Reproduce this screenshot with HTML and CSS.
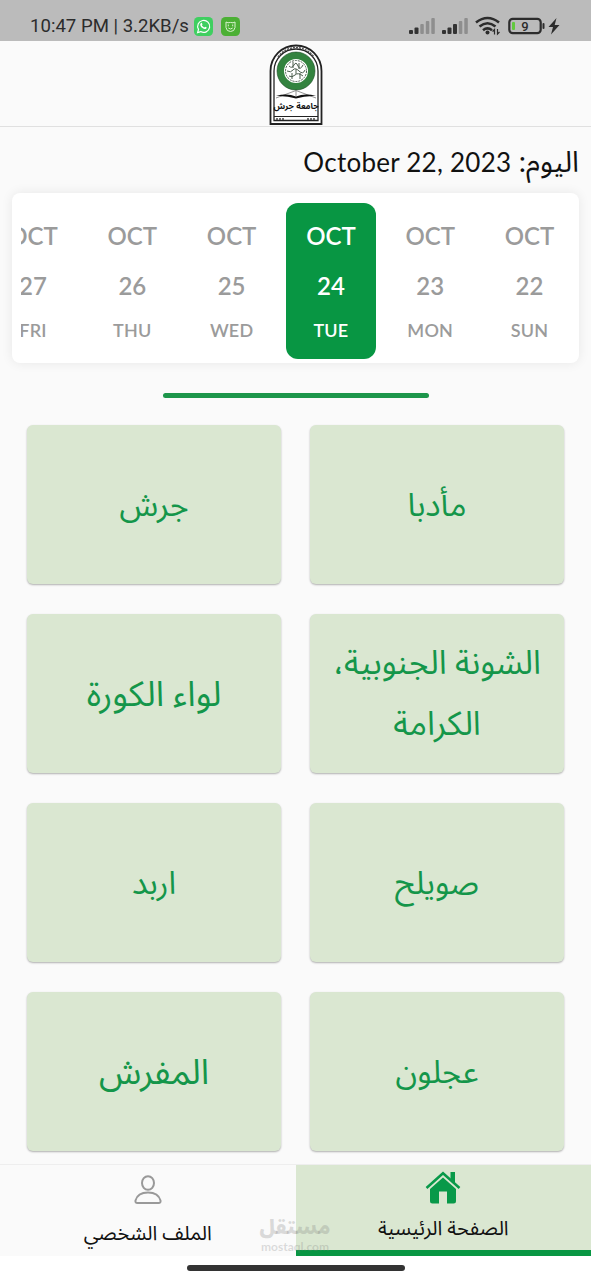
FILE: index.html
```
<!DOCTYPE html>
<html lang="ar" dir="rtl">
<head>
    <meta charset="UTF-8">
    <title>جامعة جرش</title>
    <link rel="stylesheet" href="styles.css">
</head>
<body>
<div class="status" dir="ltr">
    <span class="clock">10:47 PM | 3.2KB/s</span>
    <svg class="app" width="19" height="19" viewBox="0 0 19 19">
        <rect width="19" height="19" rx="4.5" fill="#3fcf60"/>
        <path d="M3.6 15.6l.9-3.2a6 6 0 1 1 2.2 2.2z" fill="none" stroke="#fff" stroke-width="1.2"/>
        <path d="M6.8 6.3c.6-.7 1-.5 1.3.2l.4.9-.6.9c.6 1.1 1.3 1.7 2.4 2.2l.9-.8 1.5.8c.1 1-1 1.7-2 1.5-2.500-.5-4.700-3-4.500-4.800z" fill="#fff"/>
    </svg>
    <svg class="app" width="19" height="19" viewBox="0 0 19 19">
        <rect width="19" height="19" rx="4.5" fill="#4cb035"/>
        <path d="M5 5l2 .8q2.500-.7 5 0l2-.8v5.500q-.5 4-4.500 4t-4.500-4z" fill="none" stroke="#d8f3cf"/>
        <path d="M7.300 7.500v1.800M11.700 7.500v1.800M7.300 11q2.200 2 4.400 0" fill="none" stroke="#d8f3cf"/>
    </svg>
    <svg class="signals" width="156" height="24" viewBox="0 0 156 24">
        <g fill="#333">
            <rect x="1" y="16" width="4" height="4" rx="1"/>
            <rect x="6.5" y="13.5" width="4" height="6.5" rx="1"/>
            <rect x="34" y="16" width="4" height="4" rx="1"/>
            <rect x="39.5" y="13.5" width="4" height="6.5" rx="1"/>
            <rect x="45" y="10" width="4" height="10" rx="1"/>
        </g>
        <g fill="#8e8e8e">
            <rect x="12.3" y="10" width="3.5" height="10" rx="1"/>
            <rect x="17.8" y="7" width="3.5" height="13" rx="1"/>
            <rect x="23.3" y="4" width="3.5" height="16" rx="1"/>
            <rect x="50.8" y="7" width="3.5" height="13" rx="1"/>
            <rect x="56.3" y="4" width="3.5" height="16" rx="1"/>
        </g>
        <g fill="none" stroke="#2c2c2c" stroke-width="2.6">
            <path d="M68 8.500q11.500-9 23 0"/>
            <path d="M71.500 12.500q8-6.500 16 0"/>
            <path d="M75 16.200q4.500-3.500 9 0"/>
            <rect x="101.3" y="4.8" width="31.4" height="14.4" rx="3.5" stroke-width="2.2"/>
        </g>
        <circle cx="79.5" cy="18.5" r="2" fill="#2c2c2c"/>
        <path d="M86.500 20.500v-5l-2 2M89.500 15v5l2-2" fill="none" stroke="#2c2c2c" stroke-width="1.2"/>
        <rect x="104" y="8" width="3" height="8" rx="1" fill="#62c93e"/>
        <text x="117" y="16.5" class="charge">9</text>
        <rect x="134.5" y="9" width="2" height="6" rx="1" fill="#2c2c2c"/>
        <path d="M148.500 4l-8 9h4.500l-2 7.500 8.500-9.500h-4.800z" fill="#2c2c2c"/>
    </svg>
</div>

<div class="header">
    <svg width="54" height="82" viewBox="0 0 54 82">
        <path d="M1.500 80V27a25.500 25.500 0 0 1 51 0v53z" fill="#fff" stroke="#222" stroke-width="1.8"/>
        <path d="M5 76.500V27a22 22 0 0 1 44 0v49.500z" fill="none" stroke="#222" stroke-width="1.3"/>
        <path d="M9 13a22 22 0 0 1 36 0" fill="none" stroke="#555" stroke-width="1.5" stroke-dasharray="2 1"/>
        <circle cx="27" cy="27" r="15.5" fill="#fff" stroke="#33833f" stroke-width="7"/>
        <circle cx="27" cy="27" r="19" fill="none" stroke="#244f2b" stroke-width=".6"/>
        <g fill="none" stroke="#4a5c4d" stroke-width="1">
            <circle cx="27" cy="27" r="10.5" stroke-dasharray="2 1"/>
            <path d="M20 22q3 3 5-1t4 1 5-1M18 27q4 2 6-1t6 1 6-1M20 32q3 2 6-1t8 1M24 18v6M30 19v6M27 25v5M23 29v6M31 29v6"/>
        </g>
        <path d="M27 46.500L7 54M27 46.500L47 54M27 46.500V52" fill="none" stroke="#777" stroke-width=".8"/>
        <path d="M7 52q11-3 20 .5 9-3.500 20-.5-11-.5-20 2.500-9-3-20-2.500z" fill="#111"/>
        <text x="27" y="65" class="logo-name">جامعة جرش</text>
        <path d="M5 72.500h44" stroke="#222" stroke-width="1"/>
        <path d="M7 75h9M38 75h9" stroke="#444" stroke-width="1.5" stroke-dasharray="2 1"/>
    </svg>
</div>

<div class="today">اليوم: <bdi>October 22, 2023</bdi></div>

<div class="calendar">
    <div class="days">
        <div class="day"><b>OCT</b><strong>22</strong><span>SUN</span></div>
        <div class="day"><b>OCT</b><strong>23</strong><span>MON</span></div>
        <div class="day active"><b>OCT</b><strong>24</strong><span>TUE</span></div>
        <div class="day"><b>OCT</b><strong>25</strong><span>WED</span></div>
        <div class="day"><b>OCT</b><strong>26</strong><span>THU</span></div>
        <div class="day"><b>OCT</b><strong>27</strong><span>FRI</span></div>
    </div>
</div>

<div class="line"></div>

<div class="cities">
    <a class="city">مأدبا</a>
    <a class="city">جرش</a>
    <a class="city medium">الشونة الجنوبية، الكرامة</a>
    <a class="city large">لواء الكورة</a>
    <a class="city">صويلح</a>
    <a class="city">اربد</a>
    <a class="city">عجلون</a>
    <a class="city large">المفرش</a>
</div>

<div class="tabs">
    <a class="tab on">
        <svg width="36" height="34" viewBox="0 0 36 34">
            <path d="M1.500 18L18 3.200 34.500 18" fill="none" stroke="#089949" stroke-width="2.5"/>
            <path d="M25.500 2h4.500v11l-4.500-4z" fill="#089949"/>
            <path d="M18 7.500L31 19v12q0 2.500-2.500 2.500H22V21.500h-8v12H7.500Q5 33.500 5 31V19z" fill="#089949"/>
        </svg>
        <span>الصفحة الرئيسية</span>
    </a>
    <a class="tab">
        <svg width="28" height="30" viewBox="0 0 28 30">
            <g fill="none" stroke="#999" stroke-width="2">
                <ellipse cx="14" cy="8" rx="6" ry="6.8"/>
                <path d="M3.500 28h21q2.500 0 2-2.500-2.200-8-12.500-8T1.500 25.500q-.5 2.500 2 2.500z"/>
            </g>
        </svg>
        <span>الملف الشخصي</span>
    </a>
    <div class="watermark"><b>مستقل</b><span>mostaql.com</span></div>
</div>

<div class="gesture"><i></i></div>
</body>
</html>
```
FILE: styles.css
```
* {
    box-sizing: border-box;
}

body {
    margin: 0;
    width: 591px;
    height: 1280px;
    overflow: hidden;
    background: #fafafa;
    font-family: Lato, "Noto Sans Arabic", "DejaVu Sans", sans-serif;
    color: #111;
}

svg {
    display: block;
    flex: none;
}

/* status bar */
.status {
    display: flex;
    align-items: center;
    height: 41px;
    padding: 11px 27px 0 30px;
    background: #bbb;
}

.clock {
    width: 164px;
    font: 400 18.6px/30px Roboto, sans-serif;
    color: #2c2c2c;
    white-space: nowrap;
}

.app {
    margin-right: 8px;
}

.signals {
    margin-left: auto;
}

.charge {
    font: 500 13px Roboto, sans-serif;
    fill: #2c2c2c;
    text-anchor: middle;
}

.header {
    display: flex;
    justify-content: center;
    height: 86px;
    padding-top: 3px;
    border-bottom: 1px solid #e0e0e0;
}

.logo-name {
    font: bold 8.5px "Noto Sans Arabic", "DejaVu Sans", sans-serif;
    text-anchor: middle;
    fill: #111;
}

.today {
    height: 66px;
    padding: 0 12px;
    line-height: 68px;
    font-size: 29px;
}

.today bdi {
    font-size: 26px;
    letter-spacing: .25px;
}

/* calendar */
.calendar {
    height: 170px;
    margin: 0 12px;
    padding: 10px 0 4px 9px;
    border-radius: 8px;
    background: #fff;
    box-shadow: 0 0 12px rgba(0, 0, 0, .08);
}

.days {
    display: flex;
    gap: 9.3px;
    height: 156px;
    padding-right: 4.5px;
    overflow: hidden;
}

.day {
    display: flex;
    flex: none;
    flex-direction: column;
    align-items: center;
    width: 90px;
    padding-top: 18px;
    border-radius: 12px;
    color: #9b9b9b;
}

.day b,
.day strong {
    height: 50px;
    line-height: 30px;
    font-size: 24px;
    font-weight: 600;
}

.day strong {
    height: 46px;
}

.day span {
    line-height: 26px;
    font-size: 18px;
    font-weight: 600;
    letter-spacing: .2px;
}

.day.active {
    background: #089643;
    color: #fff;
}

.line {
    width: 266px;
    height: 5px;
    margin: 30px auto 27px;
    border-radius: 3px;
    background: #1d964b;
}

/* cities */
.cities {
    display: grid;
    grid-template-columns: 254px 254px;
    grid-auto-rows: 159px;
    gap: 30px 29px;
    height: 739px;
    padding: 0 27px;
}

.city {
    display: flex;
    align-items: center;
    justify-content: center;
    padding: 0 15px 3px;
    border-radius: 6px;
    background: #dae7d1;
    box-shadow: 0 1px 2px rgba(0, 0, 0, .3);
    color: #14964a;
    font-size: 32px;
    line-height: 61px;
    text-align: center;
}

.city.medium {
    font-size: 33.3px;
}

.city.large {
    font-size: 35px;
}

/* bottom tabs */
.tabs {
    position: relative;
    display: flex;
    height: 92px;
}

.tab {
    display: flex;
    flex: 1;
    flex-direction: column;
    align-items: center;
    padding-top: 10px;
    border-top: 1px solid #eee;
    font-size: 20px;
}

.tab span {
    margin-top: 11px;
    line-height: 32px;
}

.tab.on {
    padding-top: 5px;
    border-bottom: 6px solid #089643;
    background: #dae7d1;
}

.tab.on span {
    margin-top: 7px;
}

.watermark {
    position: absolute;
    top: 50px;
    left: 258px;
    width: 74px;
    color: rgba(120, 120, 120, .25);
    font-size: 12px;
    font-weight: 700;
    text-align: center;
}

.watermark b,
.watermark span {
    display: block;
    line-height: 12px;
}

.watermark b {
    height: 27px;
    font-size: 20px;
    line-height: 24px;
}

.gesture {
    height: 24px;
    padding-top: 9px;
    background: #fff;
}

.gesture i {
    display: block;
    width: 218px;
    height: 6px;
    margin: 0 auto;
    border-radius: 3px;
    background: #333;
}
```
